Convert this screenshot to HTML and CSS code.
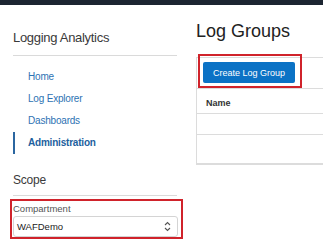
FILE: index.html
```html
<!DOCTYPE html>
<html lang="en">

<head>
    <meta charset="UTF-8">
    <meta name="viewport" content="width=device-width, initial-scale=1.0">
    <title>Log Groups</title>
    <link rel="stylesheet" href="styles.css">
</head>

<body>

    <div class="top-bar"></div>

    <div class="page">
        <!-- Sidebar -->
        <aside class="sidebar">
            <h2 class="side-title">Logging Analytics</h2>
            <ul class="side-nav">
                <li><a href="#">Home</a></li>
                <li><a href="#">Log Explorer</a></li>
                <li><a href="#">Dashboards</a></li>
                <li class="active"><a href="#">Administration</a></li>
            </ul>

            <h3 class="scope-title">Scope</h3>
            <div class="highlight compartment">
                <label for="compartment">Compartment</label>
                <div class="select-box">
                    <span id="compartment">WAFDemo</span>
                    <svg width="7" height="11" viewBox="0 0 7 11">
                        <path d="M1 4 L3.5 1.5 L6 4 M1 7 L3.5 9.5 L6 7" fill="none" stroke="#555" stroke-width="1.1"/>
                    </svg>
                </div>
            </div>
        </aside>

        <!-- Main content -->
        <main class="main">
            <h1>Log Groups</h1>
            <div class="panel">
                <div class="toolbar">
                    <button class="create-btn">Create Log Group</button>
                    <div class="highlight-box"></div>
                </div>
                <div class="table-head">Name</div>
                <div class="table-row"></div>
                <div class="table-row tall"></div>
            </div>
        </main>
    </div>

</body>

</html>
```

FILE: styles.css
```css
* {
    box-sizing: border-box;
    margin: 0;
    padding: 0;
    font-family: "Liberation Sans", Arial, sans-serif;
}

body {
    width: 323px;
    height: 241px;
    overflow: hidden;
    background: #fff;
    color: #333;
}

.top-bar {
    height: 5px;
    background: #1c2531;
}

.page {
    display: flex;
    gap: 13px;
}

/* Sidebar */
.sidebar {
    flex: 0 0 183px;
    padding: 0 6px 0 13px;
}

.side-title {
    margin-top: 25px;
    padding-bottom: 10px;
    border-bottom: 1px solid #dadada;
    font-size: 13px;
    line-height: 15px;
    font-weight: normal;
    letter-spacing: -0.3px;
    color: #3a3a3a;
}

.side-nav {
    list-style: none;
    margin-top: 10px;
}

.side-nav li {
    border-left: 2px solid transparent;
    padding-left: 13px;
    height: 22px;
    font-size: 10px;
    line-height: 22px;
}

.side-nav a {
    letter-spacing: -0.2px;
    color: #2d72b3;
    text-decoration: none;
}

.side-nav li.active {
    border-left-color: #2b66a0;
}

.side-nav li.active a {
    font-weight: bold;
    color: #1d5f9e;
}

.scope-title {
    margin-top: 18px;
    padding-bottom: 7px;
    border-bottom: 1px solid #dadada;
    font-size: 12px;
    line-height: 16px;
    font-weight: normal;
    letter-spacing: -0.2px;
    color: #3a3a3a;
}

.highlight {
    border: 2px solid #d0232b;
}

.compartment {
    margin: 3px -6px 0 -3px;
    padding: 2px 3px 0 1px;
}

.compartment label {
    display: block;
    font-size: 9.5px;
    line-height: 12px;
    color: #555;
    margin-bottom: 1px;
}

.select-box {
    display: flex;
    align-items: center;
    justify-content: space-between;
    height: 21px;
    padding: 0 6px 0 3px;
    border: 1px solid #d4d4d4;
    border-radius: 3px;
    font-size: 9.5px;
    color: #222;
}

/* Main */
.main {
    flex: 1;
    padding-top: 16px;
    overflow: hidden;
}

h1 {
    font-size: 18px;
    line-height: 21px;
    font-weight: normal;
    color: #222;
    margin-bottom: 15px;
}

.panel {
    border: 1px solid #dcdcdc;
    border-right: none;
    width: 140px;
}

.toolbar {
    position: relative;
    height: 31px;
    padding: 4px 0 0 6px;
    border-bottom: 1px solid #dcdcdc;
}

.create-btn {
    display: block;
    width: 92px;
    height: 21px;
    border: none;
    border-radius: 2px;
    background: #0b72c5;
    color: #fff;
    font-size: 9px;
    cursor: pointer;
}

.highlight-box {
    position: absolute;
    top: -4px;
    left: 1px;
    width: 104px;
    height: 34px;
    border: 2px solid #d0232b;
}

.table-head {
    height: 25px;
    padding: 9px 0 0 9px;
    border-bottom: 1px solid #dcdcdc;
    font-size: 9px;
    font-weight: bold;
    color: #333;
}

.table-row {
    height: 21px;
    border-bottom: 1px solid #dcdcdc;
}

.table-row.tall {
    height: 29px;
}
```
